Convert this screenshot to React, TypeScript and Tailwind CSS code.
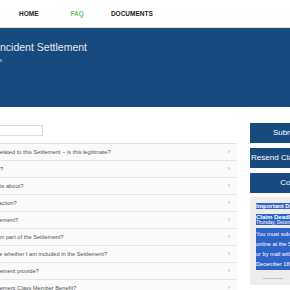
import React from 'react';

const questions = [
  'I received a notice related to this Settlement – is this legitimate?',
  'Why did I get notice?',
  'What are the lawsuits about?',
  'Why is this a class action?',
  'Why is there a Settlement?',
  'How do I know if I am part of the Settlement?',
  'What if I am not sure whether I am included in the Settlement?',
  'What does the Settlement provide?',
  'How do I get a Settlement Class Member Benefit?',
];

export default function App() {
  return (
    <div className="w-[290px] h-[290px] overflow-hidden bg-white font-['Liberation_Sans',Arial,sans-serif]">
      {/* Top nav */}
      <header className="h-[28px] flex items-center border-b border-[#dcdcdc] bg-white">
        <nav className="flex items-center pl-[19px] text-[6.5px] font-bold text-[#222]">
          <span>HOME</span>
          <span className="ml-[32px] text-[#6cc36c]">FAQ</span>
          <span className="ml-[27px]">DOCUMENTS</span>
        </nav>
      </header>

      {/* Banner */}
      <section className="h-[79px] bg-[#174a7e]">
        <div className="-ml-[28px] pt-[12px]">
          <h1 className="text-[10.5px] leading-[14px] text-[#e4ecf5]">Data Incident Settlement</h1>
          <p className="mt-[3px] text-[5px] text-[#c9d6e6]">Home / FAQs</p>
        </div>
      </section>

      <div className="flex items-start">
        {/* FAQ column */}
        <main className="-ml-[56px] w-[293px] shrink-0 pt-[18px]">
          <div className="w-[99px] h-[11px] border border-[#dddddd] bg-white" />
          <ul className="mt-[7px] border-t border-[#e3e3e3]">
            {questions.map((q) => (
              <li
                key={q}
                className="h-[17px] flex items-center justify-between pl-[6px] pr-[7px] bg-[#fafafa] border-b border-[#e6e6e6] text-[5.7px] text-[#555]"
              >
                <span className="whitespace-nowrap">{q}</span>
                <span className="text-[7px] text-[#aaa]">›</span>
              </li>
            ))}
          </ul>
        </main>

        {/* Sidebar */}
        <aside className="ml-[13px] w-[100px] shrink-0 pt-[16px] flex flex-col">
          <button className="h-[20px] bg-[#174a7e] text-white text-[8px] whitespace-nowrap">Submit a Claim</button>
          <button className="mt-[5px] h-[20px] bg-[#174a7e] text-white text-[8px] whitespace-nowrap">Resend Claim Confirmation</button>
          <button className="mt-[5px] h-[20px] bg-[#174a7e] text-white text-[8px] whitespace-nowrap">Contact Us</button>

          <div className="mt-[4px] bg-[#ededed] px-[6px] pt-[6px] pb-[4px] h-[88px]">
            <p className="text-[6px] font-bold leading-[6px] text-white">
              <span className="bg-[#3063c8]">Important Dates</span>
            </p>
            <p className="mt-[5px] text-[6px] font-bold leading-[6px] text-white">
              <span className="bg-[#3063c8]">Claim Deadline</span>
            </p>
            <p className="text-[4.5px] leading-[5px] text-white">
              <span className="bg-[#3063c8]">Thursday, December 18, 2025</span>
            </p>
            <div className="mt-[3px] bg-[#3063c8] text-white text-[5.6px] leading-[10px] py-[1px]">
              <p className="whitespace-nowrap">You must submit your claim</p>
              <p className="whitespace-nowrap">online at the Settlement Website</p>
              <p className="whitespace-nowrap">or by mail with a postmark by</p>
              <p className="whitespace-nowrap">December 18, 2025.</p>
            </div>
            <div className="mt-[8px] ml-[7px] w-[20px] h-[1px] bg-[#c4c4c4]" />
          </div>
        </aside>
      </div>
    </div>
  );
}
